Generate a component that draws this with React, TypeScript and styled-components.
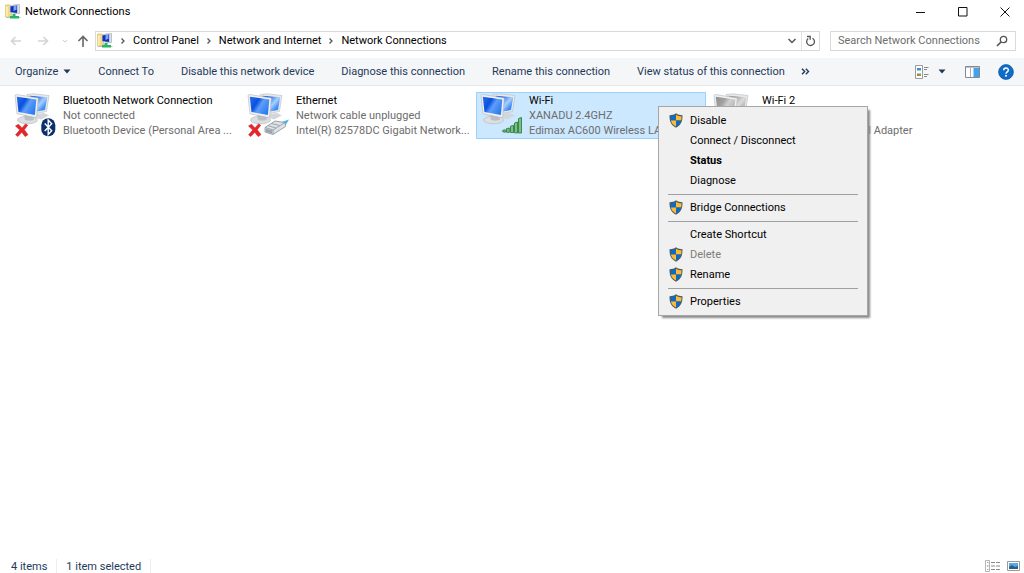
import React from "react";
import styled, { createGlobalStyle } from "styled-components";

const Global = createGlobalStyle`
  *, *::before, *::after { box-sizing: border-box; }
  body { margin: 0; background: #fff; color: #1a1a1a; font: 11px/15px "Segoe UI", Roboto, "Open Sans", sans-serif; }
  button, input { font: inherit; color: inherit; }
  button { border: 0; padding: 0; background: none; }
  a { color: inherit; text-decoration: none; }
  ul, ol { list-style: none; margin: 0; padding: 0; }
  p, h1, h2 { margin: 0; font: inherit; }
  svg { display: block; flex: none; }
`;

const Window = styled.div`
  min-height: 100vh;
  display: flex;
  flex-direction: column;
`;

const TitleBar = styled.header`
  height: 23px;
  padding-left: 5px;
  display: flex;
  align-items: center;
  gap: 4px;
`;

const Title = styled.h1`
  flex: 1;
  color: #000;
`;

const WindowButton = styled.button`
  width: 38px;
  height: 23px;
  display: grid;
  place-items: center;
`;

const AddressRow = styled.div`
  height: 35px;
  padding: 0 8px 0 5px;
  display: flex;
  align-items: center;
`;

const NavButton = styled.button<{ $width: number }>`
  width: ${(p) => p.$width}px;
  height: 20px;
  display: grid;
  place-items: center;
`;

const AddressBox = styled.div`
  flex: 1;
  height: 20px;
  border: 1px solid #d9d9d9;
  display: flex;
  align-items: center;
`;

const Crumbs = styled.ol`
  flex: 1;
  padding-left: 1px;
  display: flex;
  align-items: center;
  color: #000;
`;

const Crumb = styled.li`
  display: flex;
  align-items: center;
`;

const CrumbArrow = styled.span`
  width: 20px;
  display: grid;
  place-items: center;
`;

const AddressButton = styled.button<{ $divided?: boolean }>`
  width: 18px;
  height: 18px;
  display: grid;
  place-items: center;
  border-left: ${(p) => (p.$divided ? "1px solid #e3e3e3" : "0")};
`;

const SearchBox = styled.label`
  width: 186px;
  height: 20px;
  margin-left: 10px;
  padding: 0 7px;
  border: 1px solid #d9d9d9;
  display: flex;
  align-items: center;
`;

const SearchInput = styled.input`
  flex: 1;
  min-width: 0;
  padding: 0;
  border: 0;
  outline: 0;
  background: none;
  &::placeholder { color: #6d6d6d; opacity: 1; }
`;

const Toolbar = styled.div`
  height: 28px;
  padding: 0 10px 0 15px;
  display: flex;
  align-items: center;
  background: #f5f6f7;
  border-bottom: 1px solid #e4e8ec;
  color: #1e395b;
`;

const Commands = styled.div`
  flex: 1;
  display: flex;
  align-items: center;
  gap: 27px;
`;

const Command = styled.button`
  display: flex;
  align-items: center;
  gap: 5px;
  white-space: nowrap;
`;

const LastCommands = styled.div`
  display: flex;
  align-items: center;
  gap: 16px;
`;

const ViewTools = styled.div`
  display: flex;
  align-items: center;
`;

const ToolButton = styled.button<{ $gap: number }>`
  margin-left: ${(p) => p.$gap}px;
`;

const Content = styled.main`
  flex: 1;
  position: relative;
  padding: 6px 10px;
`;

const ItemGrid = styled.ul`
  display: grid;
  grid-template-columns: repeat(auto-fill, 230px);
  gap: 3px;
`;

const Item = styled.li<{ $selected?: boolean }>`
  height: 47px;
  padding: 0 3px;
  display: flex;
  gap: 7px;
  border: 1px solid ${(p) => (p.$selected ? "#99d1ff" : "transparent")};
  background: ${(p) => (p.$selected ? "#cce8ff" : "transparent")};
`;

const ItemText = styled.div`
  min-width: 0;
`;

const ItemName = styled.h2`
  color: #000;
`;

const ItemLine = styled.p`
  color: #6d6d6d;
  white-space: nowrap;
`;

const Menu = styled.ul`
  position: absolute;
  left: 658px;
  top: 20px;
  width: 210px;
  padding: 3px 0 4px;
  border: 1px solid #a6a6a6;
  background: #f0f0f0;
  box-shadow: 3px 3px 2px -1px #8a8a8a;
  color: #000;
`;

const MenuButton = styled.button<{ $bold?: boolean }>`
  width: 100%;
  height: 20px;
  padding-left: 10px;
  display: flex;
  align-items: center;
  gap: 7px;
  font-weight: ${(p) => (p.$bold ? 700 : 400)};
  &:disabled { color: #7c7c7c; }
`;

const MenuIcon = styled.span`
  width: 14px;
  height: 15px;
`;

const Separator = styled.li`
  height: 7px;
  padding: 4px 9px 2px;
  &::before { content: ""; display: block; height: 1px; background: #a0a0a0; }
`;

const StatusBar = styled.footer`
  height: 14px;
  padding: 0 4px 0 11px;
  display: flex;
  align-items: center;
  color: #1e395b;
`;

const StatusText = styled.span`
  padding-right: 9px;
  margin-right: 9px;
  border-right: 1px solid #eeeeee;
`;

const StatusViews = styled.div`
  margin-left: auto;
  display: flex;
  align-items: center;
  gap: 6px;
`;

const FolderNetIcon = () => (
  <svg width="16" height="16" viewBox="0 0 16 16" aria-hidden="true">
    <path d="M.5 1h5l1 1v11h-6z" fill="#f3dc80" stroke="#cdb35a" strokeWidth=".6" />
    <path d="M.8 2.500h2v10h-2z" fill="#fbeeb5" />
    <path d="M8 1l6.500-.5v9L8 9z" fill="#dde1e5" stroke="#9aa4ad" strokeWidth=".6" />
    <path d="M5 2l7.500-1v8.500L5 8.500z" fill="#1530b8" stroke="#cfd6e2" strokeWidth=".8" />
    <path d="M8.500 2.200l3-.4v4L8.500 7z" fill="#7aa4f4" />
    <path d="M7.500 10h3v2h3.500v2.500H5V12h2.500z" fill="#27b566" />
    <path d="M1 13h4v1H1zM14 13h1.500v1H14z" fill="#b6bcc0" />
  </svg>
);

const Arrow = ({ d, color, size = 14 }: { d: string; color: string; size?: number }) => (
  <svg width={size} height={size} viewBox="0 0 14 14" fill="none" stroke={color} strokeWidth="1.600" aria-hidden="true">
    <path d={d} />
  </svg>
);

const Chevron = () => (
  <svg width="6" height="8" viewBox="0 0 6 8" fill="none" stroke="#555" strokeWidth="1.300" aria-hidden="true">
    <path d="M1.500 1.500L4 4 1.500 6.500" />
  </svg>
);

const Caret = () => (
  <svg width="8" height="5" viewBox="0 0 8 5" aria-hidden="true">
    <path d="M.5.5h7L4 4.500z" fill="#1e395b" />
  </svg>
);

const Shield = () => (
  <svg width="14" height="15" viewBox="0 0 14 15" aria-hidden="true">
    <path d="M7 .3C5 1.700 3 2.200.5 2.200c0 5.300.6 9.500 6.500 12.500 5.900-3 6.500-7.200 6.500-12.500C11 2.200 9 1.700 7 .3z" fill="#4f5a60" />
    <path d="M7 1.700V7.500H1.900C1.600 6.200 1.500 5 1.500 3.300 3.500 3.200 5.400 2.700 7 1.700z" fill="#0b6cc8" />
    <path d="M7 1.700V7.500h5.100c.3-1.300.4-2.500.4-4.200C10.500 3.200 8.600 2.700 7 1.700z" fill="#fdbb35" />
    <path d="M7 7.500v6.100C4 12 2.500 10.200 1.900 7.500z" fill="#fdbb35" />
    <path d="M7 7.500v6.100c3-1.600 4.500-3.400 5.100-6.100z" fill="#0b6cc8" />
  </svg>
);

type Badge = "bluetooth" | "cable" | "signal" | "none";

const ConnectionIcon = ({ badge, off, muted }: { badge: Badge; off?: boolean; muted?: boolean }) => {
  const id = "screen-" + badge;
  const back = "back-" + badge;
  return (
    <svg width="42" height="46" viewBox="0 0 42 46" aria-hidden="true">
      <defs>
        <linearGradient id={id} x1="0" y1="0" x2="1" y2=".6">
          <stop offset="0" stopColor={muted ? "#8f8f8f" : "#2a6ee8"} />
          <stop offset=".4" stopColor={muted ? "#a2a2a2" : "#0b50e0"} />
          <stop offset=".62" stopColor={muted ? "#d0d0d0" : "#5d9ff8"} />
          <stop offset="1" stopColor={muted ? "#b5b5b5" : "#2f7df2"} />
        </linearGradient>
        <linearGradient id={back} x1=".4" y1="0" x2="1" y2=".5">
          <stop offset="0" stopColor={muted ? "#9b9b9b" : "#1a5fe6"} />
          <stop offset=".6" stopColor={muted ? "#dcdcdc" : "#a8d0fd"} />
          <stop offset="1" stopColor={muted ? "#b5b5b5" : "#3f8df4"} />
        </linearGradient>
      </defs>
      <path d="M22 21l8-1 5 2.500-8 4-6-2z" fill="#d3d7da" />
      <path d="M13 1.500L20 .8 35 2.500 32.500 18.500 19 21z" fill="#e6e9eb" stroke="#b9bec2" strokeWidth=".6" />
      <path d="M15.500 2.800L33.200 4.200 31 17 20 19z" fill={`url(#${back})`} />
      <ellipse cx="13.500" cy="27" rx="10" ry="3.800" fill="#dcdfe1" stroke="#b1b6ba" strokeWidth=".6" />
      <path d="M10 22h9l1 4.500c-2 1.500-7 1.500-9 .3z" fill="#b9bfc4" />
      <path d="M1 2.200L2.500 1.500 24.300 5 22.700 23.700 21 24.500 3 20.800z" fill="#eef0f1" stroke="#b1b6ba" strokeWidth=".6" />
      <path d="M2.800 3.700L22.300 6.500 20.900 22 4.500 19z" fill={`url(#${id})`} />
      {off && (
        <path d="M1.500 33l3-1.800 3.500 3.700 3.500-4 2.200 1.300-3.400 4.500 3.700 5-2.900 1.900-3.300-4.300-4 4.300-2.200-1.800 4.200-4.700z" fill="#e8262a" stroke="#c01418" strokeWidth=".5" />
      )}
      {badge === "bluetooth" && (
        <g>
          <rect x="27.300" y="25.300" width="14" height="18" rx="6.900" fill="#0a2f6b" />
          <path d="M30.700 30.500l7 7.300-3.500 3.700V27.100l3.500 3.700-7 7.300" fill="none" stroke="#fff" strokeWidth="1.400" />
        </g>
      )}
      {badge === "cable" && (
        <g strokeLinejoin="round">
          <path d="M32 30l10-3.500-3 5-4 2z" fill="#46b4e6" />
          <path d="M18 34.500l10-6.500 10 1.500.5 4-12.500 8-8-2.500z" fill="#dde2e6" stroke="#84909a" strokeWidth=".8" />
          <path d="M18 34.500l8 2.500 12-7.500M26 37v4M21 32.700l8 2.300M24.500 30.500l8 2" fill="none" stroke="#8c979f" strokeWidth=".8" />
          <path d="M20 36v3M22 36.700v3M24 37.200v3" stroke="#4a5a66" strokeWidth=".9" />
        </g>
      )}
      {badge === "signal" && (
        <g fill="#7cc184" stroke="#2f7f45" strokeWidth=".9">
          <path d="M22.800 38.800v-1.500l2.500-.5v2.500zM26.500 39.200v-3.600l2.800-.6v4.400zM30.500 39.400v-6.200l3-.8v7.200zM34.500 39.800v-9.800l3-1v11zM38.500 40V25.500l3-1V40z" />
        </g>
      )}
    </svg>
  );
};

const items: { name: string; status: string; device: string; badge: Badge; off?: boolean; muted?: boolean; selected?: boolean }[] = [
  { name: "Bluetooth Network Connection", status: "Not connected", device: "Bluetooth Device (Personal Area ...", badge: "bluetooth", off: true },
  { name: "Ethernet", status: "Network cable unplugged", device: "Intel(R) 82578DC Gigabit Network...", badge: "cable", off: true },
  { name: "Wi-Fi", status: "XANADU 2.4GHZ", device: "Edimax AC600 Wireless LAN", badge: "signal", selected: true },
  { name: "Wi-Fi 2", status: "", device: "Microsoft Wi-Fi Virtual Adapter", badge: "none", muted: true },
];

type Entry = { label: string; shield?: boolean; bold?: boolean; disabled?: boolean };

const menu: (Entry | null)[] = [
  { label: "Disable", shield: true },
  { label: "Connect / Disconnect" },
  { label: "Status", bold: true },
  { label: "Diagnose" },
  null,
  { label: "Bridge Connections", shield: true },
  null,
  { label: "Create Shortcut" },
  { label: "Delete", shield: true, disabled: true },
  { label: "Rename", shield: true },
  null,
  { label: "Properties", shield: true },
];

const commands = [
  "Connect To",
  "Disable this network device",
  "Diagnose this connection",
  "Rename this connection",
];

export default function App() {
  return (
    <>
      <Global />
      <Window>
        <TitleBar>
          <FolderNetIcon />
          <Title>Network Connections</Title>
          <WindowButton aria-label="Minimize">
            <svg width="10" height="10" viewBox="0 0 10 10"><path d="M0 5.500h9" stroke="#111" /></svg>
          </WindowButton>
          <WindowButton aria-label="Maximize">
            <svg width="10" height="10" viewBox="0 0 10 10"><path d="M.5.5h8.500v8.500H.5z" fill="none" stroke="#111" /></svg>
          </WindowButton>
          <WindowButton aria-label="Close">
            <svg width="10" height="10" viewBox="0 0 10 10"><path d="M.5.5l9 9M9.500.5l-9 9" stroke="#111" /></svg>
          </WindowButton>
        </TitleBar>

        <AddressRow>
          <NavButton $width={22} aria-label="Back"><Arrow d="M12 7H2.500M6.500 3L2.500 7l4 4" color="#d4d4d4" /></NavButton>
          <NavButton $width={32} aria-label="Forward"><Arrow d="M2 7h9.500M7.500 3l4 4-4 4" color="#d4d4d4" /></NavButton>
          <NavButton $width={12} aria-label="Recent locations"><Arrow d="M3 5l4 4 4-4" color="#c4c4c4" size={8} /></NavButton>
          <NavButton $width={24} aria-label="Up"><Arrow d="M7 13V2.500M2.500 7L7 2.500 11.500 7" color="#666" /></NavButton>
          <AddressBox>
            <Crumbs>
              <FolderNetIcon />
              {["Control Panel", "Network and Internet", "Network Connections"].map((c) => (
                <Crumb key={c}>
                  <CrumbArrow><Chevron /></CrumbArrow>
                  <a href="#">{c}</a>
                </Crumb>
              ))}
            </Crumbs>
            <AddressButton aria-label="Previous locations">
              <svg width="10" height="8" viewBox="0 0 10 8"><path d="M1.500 2L5 5.500 8.500 2" fill="none" stroke="#555" strokeWidth="1.500" /></svg>
            </AddressButton>
            <AddressButton $divided aria-label="Refresh">
              <svg width="11" height="12" viewBox="0 0 11 12" fill="none" stroke="#555" strokeWidth="1.300">
                <path d="M7.500 3.200A3.900 3.900 0 1 1 3.200 3.500M2 1.500h3.200v3.200" />
              </svg>
            </AddressButton>
          </AddressBox>
          <SearchBox>
            <SearchInput type="search" aria-label="Search Network Connections" placeholder="Search Network Connections" />
            <svg width="12" height="12" viewBox="0 0 12 12" fill="none" stroke="#555" strokeWidth="1.300" aria-hidden="true">
              <circle cx="7.500" cy="4.500" r="3.200" /><path d="M5 7L1 11" strokeWidth="1.700" />
            </svg>
          </SearchBox>
        </AddressRow>

        <Toolbar>
          <Commands>
            <Command>Organize <Caret /></Command>
            {commands.map((c) => <Command key={c}>{c}</Command>)}
            <LastCommands>
              <Command>View status of this connection</Command>
              <Command aria-label="More commands">
                <svg width="9" height="7" viewBox="0 0 9 7" fill="none" stroke="#1e395b" strokeWidth="1.400"><path d="M1 .8l2.700 2.700L1 6.200M4.800.8l2.700 2.700-2.700 2.700" /></svg>
              </Command>
            </LastCommands>
          </Commands>
          <ViewTools>
            <ToolButton $gap={0} aria-label="Change your view">
              <svg width="14" height="14" viewBox="0 0 14 14">
                <path d="M.5.5h7v13h-7z" fill="#fff" stroke="#9b9b9b" />
                <path d="M2 3h4v2.500H2z" fill="#3f8fd8" /><path d="M2 8.500h2V11H2z" fill="#c9743a" /><path d="M4 8.500h2V11H4z" fill="#5fae4b" />
                <path d="M9 2.500h4.500M9 4.500h3M9 9.500h4.500M9 11.500h3" stroke="#8a8a8a" />
              </svg>
            </ToolButton>
            <ToolButton $gap={9} aria-label="More options"><Caret /></ToolButton>
            <ToolButton $gap={19} aria-label="Preview pane">
              <svg width="15" height="12" viewBox="0 0 15 12">
                <path d="M.5.5h14v11H.5z" fill="#fff" stroke="#7f8a94" /><path d="M.5 1h14" stroke="#7f8a94" />
                <path d="M8.500 2H14v9H8.500z" fill="#43a0ea" /><path d="M5.500 2v9" stroke="#a9b2ba" />
              </svg>
            </ToolButton>
            <ToolButton $gap={18} aria-label="Help">
              <svg width="16" height="16" viewBox="0 0 16 16">
                <circle cx="8" cy="8" r="7.400" fill="#0f6cc9" stroke="#0a4f9c" strokeWidth=".7" />
                <path d="M5.700 6.300c0-3 4.700-3 4.700-.3C10.400 7.800 8 7.800 8 9.700" fill="none" stroke="#fff" strokeWidth="1.500" />
                <circle cx="8" cy="11.800" r="1" fill="#fff" />
              </svg>
            </ToolButton>
          </ViewTools>
        </Toolbar>

        <Content>
          <ItemGrid>
            {items.map((i) => (
              <Item key={i.name} $selected={i.selected}>
                <ConnectionIcon badge={i.badge} off={i.off} muted={i.muted} />
                <ItemText>
                  <ItemName>{i.name}</ItemName>
                  <ItemLine>{i.status || "\u00a0"}</ItemLine>
                  <ItemLine>{i.device}</ItemLine>
                </ItemText>
              </Item>
            ))}
          </ItemGrid>
          <Menu>
            {menu.map((m, n) =>
              m ? (
                <li key={m.label}>
                  <MenuButton $bold={m.bold} disabled={m.disabled}>
                    <MenuIcon>{m.shield && <Shield />}</MenuIcon>
                    {m.label}
                  </MenuButton>
                </li>
              ) : (
                <Separator key={n} role="separator" />
              )
            )}
          </Menu>
        </Content>

        <StatusBar>
          <StatusText>4 items</StatusText>
          <StatusText>1 item selected</StatusText>
          <StatusViews>
            <button aria-label="Details view">
              <svg width="16" height="12" viewBox="0 0 16 12">
                <path d="M.5.5h4v11h-4z" fill="#fff" stroke="#b5b5b5" />
                <path d="M2 2.500h1.500M2 9.500h1.500" stroke="#c97" /><path d="M2 6h1.500" stroke="#58a" />
                <path d="M6 2.500h4M11 2.500h4M6 6h4M11 6h4M6 9.500h4M11 9.500h4" stroke="#8a8a8a" />
              </svg>
            </button>
            <button aria-label="Large icons view">
              <svg width="13" height="10" viewBox="0 0 13 10">
                <path d="M.5.5h12v9H.5z" fill="#fff" stroke="#9a9a9a" /><path d="M2 2h9v6H2z" fill="#5aa7e8" /><path d="M2 6l3-2 3 2 3-1v3H2z" fill="#2b5f7d" />
              </svg>
            </button>
          </StatusViews>
        </StatusBar>
      </Window>
    </>
  );
}
